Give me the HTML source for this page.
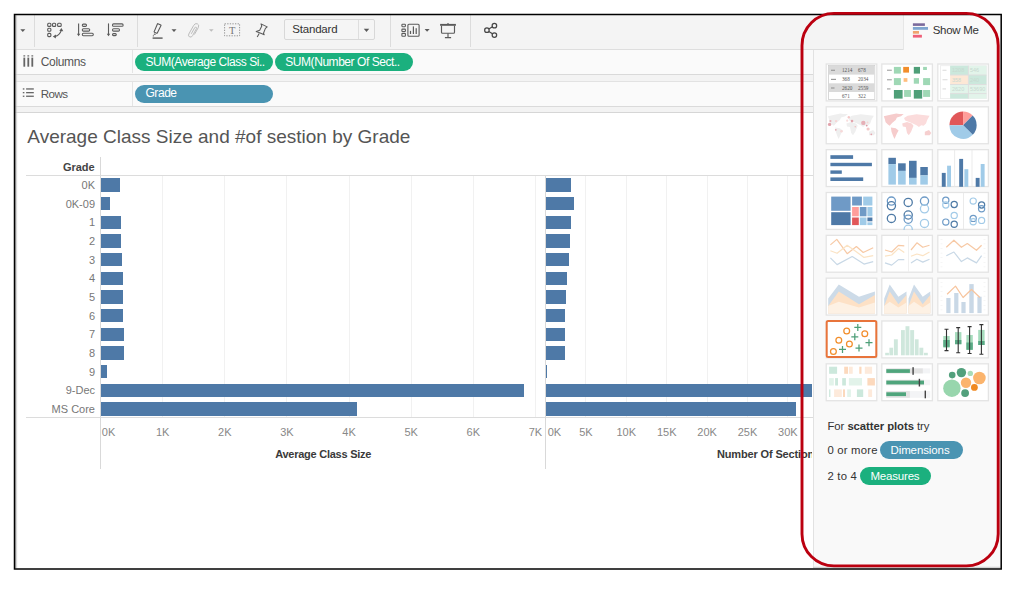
<!DOCTYPE html>
<html><head><meta charset="utf-8"><title>Tableau Show Me</title>
<style>
*{box-sizing:border-box;margin:0;padding:0}
html,body{width:1024px;height:589px;overflow:hidden;background:#fff;font-family:"Liberation Sans",sans-serif}
.a{position:absolute}
.t{position:absolute;white-space:nowrap;line-height:1}
.pill{position:absolute;color:#fff;white-space:nowrap;overflow:hidden;line-height:1}
.pill span{position:absolute;white-space:nowrap}
.g{background:#1bb07e}
.b{background:#4a94b2}
.bar{position:absolute;background:#4e79a7}
</style></head><body>

<div class="a" style="left:813.00px;top:49.00px;width:187.50px;height:519.00px;background:#f9f9f9;"></div>
<div class="a" style="left:812.50px;top:49.00px;width:1.00px;height:519.00px;background:#e2e2e2;"></div>
<div class="a" style="left:15.00px;top:15.00px;width:888.50px;height:34.00px;background:#f4f4f4;"></div>
<div class="a" style="left:15.00px;top:48.60px;width:888.50px;height:1.00px;background:#dedede;"></div>
<div class="a" style="left:903.50px;top:15.00px;width:97.00px;height:34.60px;background:#f9f9f9;"></div>
<div class="a" style="left:903.00px;top:15.00px;width:1.00px;height:34.60px;background:#e6e6e6;"></div>
<div class="a" style="left:15.00px;top:49.60px;width:797.50px;height:24.40px;background:#fafafa;"></div>
<div class="a" style="left:15.00px;top:73.50px;width:797.50px;height:1.00px;background:#d9d9d9;"></div>
<div class="a" style="left:15.00px;top:74.50px;width:797.50px;height:6.50px;background:#f3f3f3;"></div>
<div class="a" style="left:15.00px;top:81.00px;width:797.50px;height:1.00px;background:#e2e2e2;"></div>
<div class="a" style="left:15.00px;top:82.00px;width:797.50px;height:24.00px;background:#fafafa;"></div>
<div class="a" style="left:15.00px;top:106.00px;width:797.50px;height:1.00px;background:#dadada;"></div>
<div class="a" style="left:15.00px;top:107.00px;width:797.50px;height:4.80px;background:#f3f3f3;"></div>
<div class="a" style="left:15.00px;top:111.80px;width:797.50px;height:1.00px;background:#d6d6d6;"></div>
<div class="a" style="left:132.00px;top:49.60px;width:1.00px;height:23.90px;background:#e4e4e4;"></div>
<div class="a" style="left:132.00px;top:82.00px;width:1.00px;height:24.00px;background:#e4e4e4;"></div>
<div class="a" style="left:34.00px;top:15.00px;width:1.00px;height:32.00px;background:#dcdcdc;"></div>
<div class="a" style="left:136.50px;top:15.00px;width:1.00px;height:32.00px;background:#dcdcdc;"></div>
<div class="a" style="left:389.50px;top:15.00px;width:1.00px;height:32.00px;background:#dcdcdc;"></div>
<div class="a" style="left:469.50px;top:15.00px;width:1.00px;height:32.00px;background:#dcdcdc;"></div>
<div class="a" style="left:15.00px;top:112.80px;width:797.50px;height:455.20px;background:#ffffff;"></div>
<div class="t" style="left:27.30px;top:127.02px;font-size:19px;color:#555;font-weight:normal;letter-spacing:0px;">Average Class Size and #of sestion by Grade</div>
<div class="t" style="right:929.30px;top:162.49px;font-size:11px;color:#444;font-weight:bold;letter-spacing:0px;">Grade</div>
<div class="a" style="left:162.13px;top:176.00px;width:1.00px;height:241.00px;background:#f1f1f1;"></div>
<div class="a" style="left:224.26px;top:176.00px;width:1.00px;height:241.00px;background:#f1f1f1;"></div>
<div class="a" style="left:286.39px;top:176.00px;width:1.00px;height:241.00px;background:#f1f1f1;"></div>
<div class="a" style="left:348.52px;top:176.00px;width:1.00px;height:241.00px;background:#f1f1f1;"></div>
<div class="a" style="left:410.65px;top:176.00px;width:1.00px;height:241.00px;background:#f1f1f1;"></div>
<div class="a" style="left:472.78px;top:176.00px;width:1.00px;height:241.00px;background:#f1f1f1;"></div>
<div class="a" style="left:534.91px;top:176.00px;width:1.00px;height:241.00px;background:#f1f1f1;"></div>
<div class="a" style="left:585.40px;top:176.00px;width:1.00px;height:241.00px;background:#f1f1f1;"></div>
<div class="a" style="left:625.80px;top:176.00px;width:1.00px;height:241.00px;background:#f1f1f1;"></div>
<div class="a" style="left:666.20px;top:176.00px;width:1.00px;height:241.00px;background:#f1f1f1;"></div>
<div class="a" style="left:706.60px;top:176.00px;width:1.00px;height:241.00px;background:#f1f1f1;"></div>
<div class="a" style="left:747.00px;top:176.00px;width:1.00px;height:241.00px;background:#f1f1f1;"></div>
<div class="a" style="left:787.40px;top:176.00px;width:1.00px;height:241.00px;background:#f1f1f1;"></div>
<div class="a" style="left:25.50px;top:175.20px;width:787.00px;height:1.00px;background:#dcdcdc;"></div>
<div class="a" style="left:25.50px;top:416.50px;width:787.00px;height:1.00px;background:#dcdcdc;"></div>
<div class="a" style="left:100.00px;top:157.00px;width:1.00px;height:311.50px;background:#d9d9d9;"></div>
<div class="a" style="left:545.00px;top:176.00px;width:1.00px;height:292.50px;background:#d9d9d9;"></div>
<div class="a" style="left:100.70px;top:178.40px;width:19.10px;height:13.40px;background:#4e79a7;"></div>
<div class="a" style="left:545.90px;top:178.40px;width:24.90px;height:13.40px;background:#4e79a7;"></div>
<div class="t" style="right:929.00px;top:180.19px;font-size:11px;color:#777;font-weight:normal;letter-spacing:0px;">0K</div>
<div class="a" style="left:100.70px;top:197.05px;width:8.90px;height:13.40px;background:#4e79a7;"></div>
<div class="a" style="left:545.90px;top:197.05px;width:28.50px;height:13.40px;background:#4e79a7;"></div>
<div class="t" style="right:929.00px;top:198.84px;font-size:11px;color:#777;font-weight:normal;letter-spacing:0px;">0K-09</div>
<div class="a" style="left:100.70px;top:215.70px;width:20.50px;height:13.40px;background:#4e79a7;"></div>
<div class="a" style="left:545.90px;top:215.70px;width:24.90px;height:13.40px;background:#4e79a7;"></div>
<div class="t" style="right:929.00px;top:217.49px;font-size:11px;color:#777;font-weight:normal;letter-spacing:0px;">1</div>
<div class="a" style="left:100.70px;top:234.35px;width:20.40px;height:13.40px;background:#4e79a7;"></div>
<div class="a" style="left:545.90px;top:234.35px;width:24.00px;height:13.40px;background:#4e79a7;"></div>
<div class="t" style="right:929.00px;top:236.14px;font-size:11px;color:#777;font-weight:normal;letter-spacing:0px;">2</div>
<div class="a" style="left:100.70px;top:253.00px;width:21.50px;height:13.40px;background:#4e79a7;"></div>
<div class="a" style="left:545.90px;top:253.00px;width:22.70px;height:13.40px;background:#4e79a7;"></div>
<div class="t" style="right:929.00px;top:254.79px;font-size:11px;color:#777;font-weight:normal;letter-spacing:0px;">3</div>
<div class="a" style="left:100.70px;top:271.65px;width:22.60px;height:13.40px;background:#4e79a7;"></div>
<div class="a" style="left:545.90px;top:271.65px;width:21.00px;height:13.40px;background:#4e79a7;"></div>
<div class="t" style="right:929.00px;top:273.44px;font-size:11px;color:#777;font-weight:normal;letter-spacing:0px;">4</div>
<div class="a" style="left:100.70px;top:290.30px;width:22.70px;height:13.40px;background:#4e79a7;"></div>
<div class="a" style="left:545.90px;top:290.30px;width:20.10px;height:13.40px;background:#4e79a7;"></div>
<div class="t" style="right:929.00px;top:292.09px;font-size:11px;color:#777;font-weight:normal;letter-spacing:0px;">5</div>
<div class="a" style="left:100.70px;top:308.95px;width:22.70px;height:13.40px;background:#4e79a7;"></div>
<div class="a" style="left:545.90px;top:308.95px;width:19.10px;height:13.40px;background:#4e79a7;"></div>
<div class="t" style="right:929.00px;top:310.74px;font-size:11px;color:#777;font-weight:normal;letter-spacing:0px;">6</div>
<div class="a" style="left:100.70px;top:327.60px;width:23.30px;height:13.40px;background:#4e79a7;"></div>
<div class="a" style="left:545.90px;top:327.60px;width:19.10px;height:13.40px;background:#4e79a7;"></div>
<div class="t" style="right:929.00px;top:329.39px;font-size:11px;color:#777;font-weight:normal;letter-spacing:0px;">7</div>
<div class="a" style="left:100.70px;top:346.25px;width:23.30px;height:13.40px;background:#4e79a7;"></div>
<div class="a" style="left:545.90px;top:346.25px;width:19.10px;height:13.40px;background:#4e79a7;"></div>
<div class="t" style="right:929.00px;top:348.04px;font-size:11px;color:#777;font-weight:normal;letter-spacing:0px;">8</div>
<div class="a" style="left:100.70px;top:364.90px;width:6.50px;height:13.40px;background:#4e79a7;"></div>
<div class="a" style="left:545.90px;top:364.90px;width:0.90px;height:13.40px;background:#4e79a7;"></div>
<div class="t" style="right:929.00px;top:366.69px;font-size:11px;color:#777;font-weight:normal;letter-spacing:0px;">9</div>
<div class="a" style="left:100.70px;top:383.55px;width:423.50px;height:13.40px;background:#4e79a7;"></div>
<div class="a" style="left:545.90px;top:383.55px;width:266.60px;height:13.40px;background:#4e79a7;"></div>
<div class="t" style="right:929.00px;top:385.34px;font-size:11px;color:#777;font-weight:normal;letter-spacing:0px;">9-Dec</div>
<div class="a" style="left:100.70px;top:402.20px;width:255.90px;height:13.40px;background:#4e79a7;"></div>
<div class="a" style="left:545.90px;top:402.20px;width:249.90px;height:13.40px;background:#4e79a7;"></div>
<div class="t" style="right:929.00px;top:403.99px;font-size:11px;color:#777;font-weight:normal;letter-spacing:0px;">MS Core</div>
<div class="t" style="left:101.80px;top:426.79px;font-size:11px;color:#888;font-weight:normal;letter-spacing:0px;">0K</div>
<div class="t" style="left:62.63px;width:200px;text-align:center;top:426.79px;font-size:11px;color:#888;font-weight:normal;letter-spacing:0px;">1K</div>
<div class="t" style="left:124.76px;width:200px;text-align:center;top:426.79px;font-size:11px;color:#888;font-weight:normal;letter-spacing:0px;">2K</div>
<div class="t" style="left:186.89px;width:200px;text-align:center;top:426.79px;font-size:11px;color:#888;font-weight:normal;letter-spacing:0px;">3K</div>
<div class="t" style="left:249.02px;width:200px;text-align:center;top:426.79px;font-size:11px;color:#888;font-weight:normal;letter-spacing:0px;">4K</div>
<div class="t" style="left:311.15px;width:200px;text-align:center;top:426.79px;font-size:11px;color:#888;font-weight:normal;letter-spacing:0px;">5K</div>
<div class="t" style="left:373.28px;width:200px;text-align:center;top:426.79px;font-size:11px;color:#888;font-weight:normal;letter-spacing:0px;">6K</div>
<div class="t" style="left:435.41px;width:200px;text-align:center;top:426.79px;font-size:11px;color:#888;font-weight:normal;letter-spacing:0px;">7K</div>
<div class="t" style="left:547.70px;top:426.79px;font-size:11px;color:#888;font-weight:normal;letter-spacing:0px;">0K</div>
<div class="t" style="left:485.90px;width:200px;text-align:center;top:426.79px;font-size:11px;color:#888;font-weight:normal;letter-spacing:0px;">5K</div>
<div class="t" style="left:526.30px;width:200px;text-align:center;top:426.79px;font-size:11px;color:#888;font-weight:normal;letter-spacing:0px;">10K</div>
<div class="t" style="left:566.70px;width:200px;text-align:center;top:426.79px;font-size:11px;color:#888;font-weight:normal;letter-spacing:0px;">15K</div>
<div class="t" style="left:607.10px;width:200px;text-align:center;top:426.79px;font-size:11px;color:#888;font-weight:normal;letter-spacing:0px;">20K</div>
<div class="t" style="left:647.50px;width:200px;text-align:center;top:426.79px;font-size:11px;color:#888;font-weight:normal;letter-spacing:0px;">25K</div>
<div class="t" style="left:687.90px;width:200px;text-align:center;top:426.79px;font-size:11px;color:#888;font-weight:normal;letter-spacing:0px;">30K</div>
<div class="t" style="left:223.20px;width:200px;text-align:center;top:449.29px;font-size:11px;color:#3a3a3a;font-weight:bold;letter-spacing:-0.25px;">Average Class Size</div>
<div class="a" style="left:700px;top:440px;width:111.6px;height:30px;overflow:hidden"><div class="t" style="left:17.00px;top:9.29px;font-size:11px;color:#3a3a3a;font-weight:bold;letter-spacing:-0.15px;">Number Of Sections</div></div>
<div class="t" style="left:40.80px;top:55.84px;font-size:12px;color:#555;font-weight:normal;letter-spacing:-0.35px;">Columns</div>
<div class="t" style="left:40.85px;top:87.98px;font-size:11.6px;color:#555;font-weight:normal;letter-spacing:-0.6px;">Rows</div>
<div class="pill g" style="left:135.2px;top:52.8px;width:137.5px;height:18.5px;border-radius:9.25px"><span style="left:10.300000000000011px;top:2.74px;font-size:12px;letter-spacing:-0.45px">SUM(Average Class Si..</span></div>
<div class="pill g" style="left:275px;top:52.8px;width:137.5px;height:18.5px;border-radius:9.25px"><span style="left:10.300000000000011px;top:2.74px;font-size:12px;letter-spacing:-0.45px">SUM(Number Of Sect..</span></div>
<div class="pill b" style="left:135.2px;top:84.5px;width:137.5px;height:18.299999999999997px;border-radius:9.149999999999999px"><span style="left:10.300000000000011px;top:2.74px;font-size:12px;letter-spacing:-0.45px">Grade</span></div>
<div class="a" style="left:284.3px;top:19.3px;width:90.4px;height:20.9px;border:1px solid #d8d8d8;border-radius:2px;background:#f5f5f5"></div>
<div class="a" style="left:358.00px;top:20.30px;width:1.00px;height:18.90px;background:#dedede;"></div>
<div class="t" style="left:292.30px;top:24.02px;font-size:11.5px;color:#333;font-weight:normal;letter-spacing:-0.2px;">Standard</div>
<svg class="a" style="left:0;top:0" width="1024" height="120">
<g fill="#5a5a5a">
<path d="M20.3 29.3 L25.3 29.3 L22.8 32 Z"/>
<path d="M171.5 29.2 L176.5 29.2 L174 31.9 Z"/>
<path d="M209 29.2 L213.6 29.2 L211.3 31.8 Z" fill="#bdbdbd"/>
<path d="M363.8 28.8 L369.2 28.8 L366.5 31.9 Z"/>
<path d="M424.6 29.1 L429.6 29.1 L427.1 31.7 Z"/>
</g>
<g fill="none" stroke="#5a5a5a" stroke-width="1.1">
<!-- swap -->
<rect x="47.7" y="23.2" width="3.2" height="3.2" rx="1"/>
<rect x="52.5" y="23.2" width="3.2" height="3.2" rx="1"/>
<rect x="57.6" y="23.2" width="3.6" height="3.2" rx="1"/>
<rect x="47.7" y="28.2" width="3.2" height="3.0" rx="1"/>
<rect x="47.7" y="33.4" width="3.2" height="3.2" rx="1"/>
<path d="M55 36.4 Q59.6 35.6 61.3 30.4"/>
</g>
<g fill="#5a5a5a">
<path d="M52.8 36.6 L56 34.4 L55.8 38.5 Z"/>
<path d="M61.4 28 L59.3 31 L63.3 31.2 Z"/>
</g>
<g fill="none" stroke="#5a5a5a" stroke-width="1.1">
<!-- sort asc -->
<path d="M78.6 23.4 V34.5"/>
<rect x="82.3" y="24.1" width="4.2" height="2.3" rx="1.1"/>
<rect x="82.3" y="28.7" width="7.4" height="2.4" rx="1.1"/>
<rect x="82.3" y="33.3" width="11.0" height="2.4" rx="1.1"/>
<!-- sort desc -->
<path d="M108.5 23.4 V34.5"/>
<rect x="112.5" y="23.9" width="10.6" height="2.4" rx="1.1"/>
<rect x="112.5" y="28.8" width="7.0" height="2.3" rx="1.1"/>
<rect x="112.5" y="33.6" width="3.8" height="2.0" rx="1"/>
</g>
<g fill="#5a5a5a">
<path d="M76.9 33.8 L80.3 33.8 L78.6 36.2 Z"/>
<path d="M106.8 33.8 L110.2 33.8 L108.5 36.2 Z"/>
</g>
<!-- highlighter -->
<g fill="none" stroke="#5a5a5a" stroke-width="1.1">
<path d="M157.9 23.7 L160.8 24.9 Q161.2 25.2 161 25.6 L157.3 32.9 Q157 33.4 156.5 33.2 L154.5 32.3 Q154 32 154.2 31.6 L157.4 24 Q157.6 23.6 157.9 23.7 Z"/>
<path d="M153.8 33.9 L155.5 34.6"/>
<path d="M153.5 35.4 L153.2 36.3"/>
</g>
<rect x="152.6" y="37.4" width="10" height="1.4" fill="#5a5a5a"/>
<!-- paperclip -->
<g fill="none" stroke="#bcbcbc" stroke-width="1">
<path d="M194.4 34.5 L198.3 27.6 Q199.6 24.6 197.2 23.7 Q194.9 23 193.5 25.7 L188.8 34 Q187.9 36.2 189.7 37 Q191.6 37.6 192.6 35.6 L196.4 28.7 Q197 27.5 196.1 27.1 Q195.2 26.8 194.6 27.9 L191.3 33.8"/>
</g>
<!-- T box -->
<rect x="224.6" y="23.8" width="15" height="12" fill="none" stroke="#8a8a8a" stroke-width="0.9" stroke-dasharray="1.3 1.3"/>
<text x="232.1" y="33.6" font-family="Liberation Serif" font-size="10.5" fill="#777" text-anchor="middle">T</text>
<!-- pin -->
<g fill="none" stroke="#5a5a5a" stroke-width="1.05" stroke-linejoin="round">
<path d="M261 23.9 L267.2 26.9 L265.4 28.4 L263.5 33.3 L264.2 34.7 L261.4 33.5 L256.2 31.4 L259.7 30.2 L261.8 26 Z"/>
<path d="M259.2 33.5 L257.2 37.1"/>
</g>
<!-- show/hide cards -->
<g fill="none" stroke="#5a5a5a" stroke-width="1.1">
<rect x="401.9" y="24.3" width="3.5" height="2.4" rx="0.6"/>
<rect x="401.9" y="29.1" width="3.5" height="2.4" rx="0.6"/>
<rect x="401.9" y="33.4" width="3.5" height="2.9" rx="0.6"/>
<rect x="407.9" y="24.3" width="11.2" height="12" rx="1"/>
</g>
<g fill="#5a5a5a">
<rect x="409.9" y="30.9" width="1.2" height="3.1"/>
<rect x="412.8" y="26.4" width="1.2" height="7.6"/>
<rect x="415.6" y="28.2" width="1.2" height="5.8"/>
</g>
<!-- presentation -->
<g fill="none" stroke="#5a5a5a" stroke-width="1.15">
<path d="M441.5 25.8 V32.2 Q441.5 33.2 442.5 33.2 H453.5 Q454.5 33.2 454.5 32.2 V25.8"/>
<path d="M448 33.2 V37.6 M444.9 37.6 H451.1"/>
</g>
<rect x="440.1" y="23.9" width="15.8" height="1.9" fill="#5a5a5a"/>
<rect x="447.4" y="23" width="1.2" height="1" fill="#5a5a5a"/>
<!-- share -->
<g fill="none" stroke="#474747" stroke-width="1.25">
<circle cx="494.4" cy="25.7" r="2.25"/>
<circle cx="486.9" cy="30.2" r="2.25"/>
<circle cx="494.4" cy="35" r="2.25"/>
<path d="M488.8 29 L492.5 26.8 M488.8 31.4 L492.5 33.8"/>
</g>
<!-- show me icon -->
<rect x="912.9" y="23.3" width="12" height="2.6" fill="#7b6a9c"/>
<rect x="912.9" y="27" width="15.1" height="2.8" fill="#7fa6d0"/>
<rect x="912.9" y="31" width="6.1" height="2.7" fill="#f0a46e"/>
<rect x="912.9" y="34.8" width="9" height="2.8" fill="#ef6079"/>
<!-- rows / columns icons -->
<g fill="#666">
<rect x="23.4" y="55.3" width="1.8" height="1.2"/>
<rect x="27.4" y="55.3" width="1.8" height="1.2"/>
<rect x="31.4" y="55.3" width="1.8" height="1.2"/>
<rect x="23.4" y="57.6" width="1.8" height="9.1"/>
<rect x="27.4" y="57.6" width="1.8" height="9.1"/>
<rect x="31.4" y="57.6" width="1.8" height="9.1"/>
<rect x="22.8" y="88.3" width="1.6" height="1.3"/>
<rect x="22.8" y="92" width="1.6" height="1.3"/>
<rect x="22.8" y="95.6" width="1.6" height="1.3"/>
<rect x="26.1" y="88.3" width="7.7" height="1.3"/>
<rect x="26.1" y="92" width="7.7" height="1.3"/>
<rect x="26.1" y="95.6" width="7.7" height="1.3"/>
</g>
</svg>
<div class="t" style="left:932.70px;top:24.67px;font-size:11.5px;color:#333;font-weight:normal;letter-spacing:-0.3px;">Show Me</div>
<div class="t" style="left:827.50px;top:420.63px;font-size:11.3px;color:#333;font-weight:normal;letter-spacing:-0.05px;">For <b>scatter plots</b> try</div>
<div class="t" style="left:827.50px;top:445.33px;font-size:11.3px;color:#333;font-weight:normal;letter-spacing:0.2px;">0 or more</div>
<div class="t" style="left:827.50px;top:471.03px;font-size:11.3px;color:#333;font-weight:normal;letter-spacing:0.2px;">2 to 4</div>
<div class="pill b" style="left:879.8px;top:441.25px;width:82.90000000000009px;height:17.94999999999999px;border-radius:8.974999999999994px"><span style="left:10.700000000000045px;top:4.12px;font-size:11.5px;letter-spacing:-0.1px">Dimensions</span></div>
<div class="pill g" style="left:860.3px;top:467px;width:71.10000000000002px;height:18.30000000000001px;border-radius:9.150000000000006px"><span style="left:10.200000000000045px;top:4.17px;font-size:11.5px;letter-spacing:-0.2px">Measures</span></div>
<svg class="a" style="left:0;top:0" width="1024" height="589"><rect x="826.20" y="64.00" width="50.60" height="36.90" fill="#fff" stroke="#e4e4e4" stroke-width="1.3"/><rect x="881.80" y="64.00" width="50.60" height="36.90" fill="#fff" stroke="#e4e4e4" stroke-width="1.3"/><rect x="937.80" y="64.00" width="50.60" height="36.90" fill="#fff" stroke="#e4e4e4" stroke-width="1.3"/><rect x="826.20" y="106.83" width="50.60" height="36.90" fill="#fff" stroke="#e4e4e4" stroke-width="1.3"/><rect x="881.80" y="106.83" width="50.60" height="36.90" fill="#fff" stroke="#e4e4e4" stroke-width="1.3"/><rect x="937.80" y="106.83" width="50.60" height="36.90" fill="#fff" stroke="#e4e4e4" stroke-width="1.3"/><rect x="826.20" y="149.66" width="50.60" height="36.90" fill="#fff" stroke="#e4e4e4" stroke-width="1.3"/><rect x="881.80" y="149.66" width="50.60" height="36.90" fill="#fff" stroke="#e4e4e4" stroke-width="1.3"/><rect x="937.80" y="149.66" width="50.60" height="36.90" fill="#fff" stroke="#e4e4e4" stroke-width="1.3"/><rect x="826.20" y="192.49" width="50.60" height="36.90" fill="#fff" stroke="#e4e4e4" stroke-width="1.3"/><rect x="881.80" y="192.49" width="50.60" height="36.90" fill="#fff" stroke="#e4e4e4" stroke-width="1.3"/><rect x="937.80" y="192.49" width="50.60" height="36.90" fill="#fff" stroke="#e4e4e4" stroke-width="1.3"/><rect x="826.20" y="235.32" width="50.60" height="36.90" fill="#fff" stroke="#e4e4e4" stroke-width="1.3"/><rect x="881.80" y="235.32" width="50.60" height="36.90" fill="#fff" stroke="#e4e4e4" stroke-width="1.3"/><rect x="937.80" y="235.32" width="50.60" height="36.90" fill="#fff" stroke="#e4e4e4" stroke-width="1.3"/><rect x="826.20" y="278.15" width="50.60" height="36.90" fill="#fff" stroke="#e4e4e4" stroke-width="1.3"/><rect x="881.80" y="278.15" width="50.60" height="36.90" fill="#fff" stroke="#e4e4e4" stroke-width="1.3"/><rect x="937.80" y="278.15" width="50.60" height="36.90" fill="#fff" stroke="#e4e4e4" stroke-width="1.3"/><rect x="826.20" y="320.98" width="50.60" height="36.90" fill="#fff" stroke="#e4e4e4" stroke-width="1.3"/><rect x="881.80" y="320.98" width="50.60" height="36.90" fill="#fff" stroke="#e4e4e4" stroke-width="1.3"/><rect x="937.80" y="320.98" width="50.60" height="36.90" fill="#fff" stroke="#e4e4e4" stroke-width="1.3"/><rect x="826.20" y="363.81" width="50.60" height="36.90" fill="#fff" stroke="#e4e4e4" stroke-width="1.3"/><rect x="881.80" y="363.81" width="50.60" height="36.90" fill="#fff" stroke="#e4e4e4" stroke-width="1.3"/><rect x="937.80" y="363.81" width="50.60" height="36.90" fill="#fff" stroke="#e4e4e4" stroke-width="1.3"/><rect x="828.50" y="65.40" width="46.30" height="34.00" fill="#fff" stroke="#cfcfcf" stroke-width="0.8"/><rect x="829.00" y="65.80" width="45.40" height="8.80" fill="#dadada" /><rect x="829.00" y="83.30" width="45.40" height="8.70" fill="#dadada" /><text x="842" y="72.3" font-family="Liberation Serif" font-size="5.2" fill="#555">1214</text><text x="858" y="72.3" font-family="Liberation Serif" font-size="5.2" fill="#555">678</text><text x="842" y="81" font-family="Liberation Serif" font-size="5.2" fill="#555">368</text><text x="858" y="81" font-family="Liberation Serif" font-size="5.2" fill="#555">2034</text><text x="842" y="89.7" font-family="Liberation Serif" font-size="5.2" fill="#555">2620</text><text x="858" y="89.7" font-family="Liberation Serif" font-size="5.2" fill="#555">2559</text><text x="842" y="97.6" font-family="Liberation Serif" font-size="5.2" fill="#555">671</text><text x="858" y="97.6" font-family="Liberation Serif" font-size="5.2" fill="#555">322</text><rect x="831.00" y="69.70" width="4.00" height="1.20" fill="#9a9a9a" /><rect x="831.00" y="78.80" width="5.00" height="1.20" fill="#9a9a9a" /><rect x="831.00" y="87.40" width="3.50" height="1.20" fill="#9a9a9a" /><rect x="887.00" y="69.60" width="4.80" height="1.40" fill="#b5b5b5" /><rect x="887.00" y="79.00" width="4.80" height="1.40" fill="#b5b5b5" /><rect x="887.00" y="88.20" width="3.50" height="1.40" fill="#b5b5b5" /><rect x="893.90" y="66.90" width="7.00" height="6.70" fill="#9fd8b5" /><rect x="903.20" y="66.90" width="5.80" height="5.70" fill="#f28e2b" /><rect x="913.80" y="66.90" width="6.20" height="6.70" fill="#4f9f78" /><rect x="923.10" y="66.90" width="3.80" height="3.10" fill="#9fd8b5" /><rect x="893.90" y="78.10" width="7.00" height="7.00" fill="#9fd8b5" /><rect x="903.60" y="78.10" width="3.80" height="3.70" fill="#ffbe7d" /><rect x="913.80" y="78.10" width="5.20" height="5.60" fill="#9fd8b5" /><rect x="923.10" y="78.10" width="7.00" height="7.00" fill="#9fd8b5" /><rect x="893.90" y="90.00" width="8.70" height="8.60" fill="#4f9f78" /><rect x="904.10" y="90.00" width="6.90" height="6.90" fill="#9fd8b5" /><rect x="913.80" y="90.00" width="8.40" height="8.60" fill="#4f9f78" /><rect x="923.10" y="90.00" width="7.00" height="6.90" fill="#9fd8b5" /><rect x="940.50" y="65.70" width="45.90" height="32.90" fill="#fff" stroke="#ececec" stroke-width="0.8"/><rect x="950.10" y="65.70" width="18.30" height="9.30" fill="#cbe8dc" /><rect x="968.40" y="65.70" width="18.00" height="9.30" fill="#e2f4ea" /><rect x="950.10" y="75.00" width="18.30" height="9.50" fill="#fde8d6" /><rect x="968.40" y="75.00" width="18.00" height="9.50" fill="#cbe8dc" /><rect x="950.10" y="84.50" width="18.30" height="9.10" fill="#e2f4ea" /><rect x="968.40" y="84.50" width="18.00" height="9.10" fill="#e2f4ea" /><rect x="950.10" y="93.60" width="18.30" height="5.00" fill="#cbe8dc" /><rect x="968.40" y="93.60" width="18.00" height="5.00" fill="#e2f4ea" /><rect x="950.10" y="74.50" width="36.30" height="1.00" fill="#dedede" /><rect x="950.10" y="84.00" width="36.30" height="1.00" fill="#dedede" /><rect x="950.10" y="93.10" width="36.30" height="1.00" fill="#dedede" /><rect x="967.90" y="65.70" width="1.00" height="32.90" fill="#dedede" /><rect x="942.50" y="69.70" width="4.00" height="1.20" fill="#e0e0e0" /><rect x="942.50" y="79.10" width="5.00" height="1.20" fill="#e0e0e0" /><rect x="942.50" y="88.30" width="3.50" height="1.20" fill="#e0e0e0" /><text x="952" y="72.3" font-family="Liberation Sans" font-size="5.5" fill="#c8d9d0">1208</text><text x="970" y="72.3" font-family="Liberation Sans" font-size="5.5" fill="#c8d9d0">546</text><text x="952" y="81.8" font-family="Liberation Sans" font-size="5.5" fill="#c8d9d0">358</text><text x="970" y="81.8" font-family="Liberation Sans" font-size="5.5" fill="#c8d9d0">240</text><text x="952" y="91" font-family="Liberation Sans" font-size="5.5" fill="#c8d9d0">2620</text><text x="970" y="91" font-family="Liberation Sans" font-size="5.5" fill="#c8d9d0">53690</text><polygon points="883.8,116.3 889.1,115.1 896.3,113.6 899.2,113.9 903.7,113.9 901.0,116.3 896.9,117.5 895.7,119.9 892.1,122.9 889.7,125.8 887.9,124.6 885.6,122.3 884.7,118.7" fill="#f6cccc" /><polygon points="828.0,116.3 833.3,115.1 840.5,113.6 843.4,113.9 847.9,113.9 845.2,116.3 841.1,117.5 839.9,119.9 836.3,122.9 833.9,125.8 832.1,124.6 829.8,122.3 828.9,118.7" fill="#efefef" /><polygon points="890.9,127.6 895.7,128.2 898.6,130.6 896.9,133.6 894.5,138.9 893.3,136.5 891.5,131.8" fill="#f6cccc" /><polygon points="835.1,127.6 839.9,128.2 842.8,130.6 841.1,133.6 838.7,138.9 837.5,136.5 835.7,131.8" fill="#efefef" /><polygon points="904.0,118.1 907.6,115.7 916.5,114.2 929.6,115.7 927.2,119.9 926.0,123.5 923.6,125.8 921.2,125.2 918.9,127.0 916.5,125.2 912.9,123.5 909.9,122.3 905.2,120.5" fill="#fbdcdc" /><polygon points="848.2,118.1 851.8,115.7 860.7,114.2 873.8,115.7 871.4,119.9 870.2,123.5 867.8,125.8 865.4,125.2 863.1,127.0 860.7,125.2 857.1,123.5 854.1,122.3 849.4,120.5" fill="#efefef" /><polygon points="902.2,123.5 907.0,122.0 911.7,123.5 913.5,125.8 911.1,131.8 908.8,135.3 907.0,133.0 905.8,127.0 902.8,126.4" fill="#f9d6d6" /><polygon points="846.4,123.5 851.2,122.0 855.9,123.5 857.7,125.8 855.3,131.8 853.0,135.3 851.2,133.0 850.0,127.0 847.0,126.4" fill="#efefef" /><polygon points="924.8,131.8 929.0,130.0 931.3,133.0 929.6,135.3 924.8,135.3" fill="#f6cfcf" /><polygon points="869.0,131.8 873.2,130.0 875.5,133.0 873.8,135.3 869.0,135.3" fill="#efefef" /><circle cx="829.6" cy="124.4" r="1.7" fill="#e2a3ac"/><circle cx="830.4" cy="121.1" r="1.1" fill="#e6b0b7"/><circle cx="836.1" cy="121.1" r="1.2" fill="#f6d6d6"/><circle cx="835.8" cy="129.8" r="0.9" fill="#e3a8b0"/><circle cx="841.5" cy="131.3" r="1.3" fill="#f7d9d9"/><circle cx="848.8" cy="117.3" r="1.2" fill="#f3c8c8"/><circle cx="847.2" cy="120.7" r="1.1" fill="#f8dcdc"/><circle cx="852" cy="121.1" r="1.3" fill="#e3a5ad"/><circle cx="855.3" cy="126.7" r="0.8" fill="#f0c0c0"/><circle cx="863.3" cy="122.9" r="2.2" fill="#e6b0b7"/><circle cx="867.6" cy="122.5" r="0.9" fill="#f6d6d6"/><circle cx="866.7" cy="125.6" r="0.9" fill="#dd9aa5"/><circle cx="868.1" cy="129" r="1.6" fill="#f3c8c8"/><circle cx="871.3" cy="134.3" r="0.9" fill="#e3a5ad"/><path d="M963.05 125.2 L949.45 125.2 A13.6 13.6 0 0 1 963.05 111.6 Z" fill="#e15759"/><path d="M963.05 125.2 L963.05 111.6 A13.6 13.6 0 0 1 972.67 115.58 Z" fill="#ff9d9a"/><path d="M963.05 125.2 L972.67 115.58 A13.6 13.6 0 0 1 972.67 134.82 Z" fill="#4e79a7"/><path d="M963.05 125.2 L972.67 134.82 A13.6 13.6 0 0 1 949.45 125.2 Z" fill="#a0cbe8"/><rect x="830.40" y="155.20" width="22.70" height="3.70" fill="#4e79a7" /><rect x="830.40" y="162.80" width="41.50" height="3.40" fill="#4e79a7" /><rect x="830.40" y="170.40" width="11.40" height="3.40" fill="#4e79a7" /><rect x="830.40" y="177.40" width="32.80" height="3.60" fill="#4e79a7" /><rect x="888.40" y="157.80" width="7.50" height="6.30" fill="#4e79a7" /><rect x="888.40" y="164.10" width="7.50" height="20.50" fill="#a0cbe8" /><rect x="898.10" y="163.30" width="7.60" height="7.60" fill="#4e79a7" /><rect x="898.10" y="170.90" width="7.60" height="13.70" fill="#a0cbe8" /><rect x="909.00" y="160.80" width="7.60" height="17.10" fill="#4e79a7" /><rect x="909.00" y="177.90" width="7.60" height="6.70" fill="#a0cbe8" /><rect x="920.30" y="167.00" width="7.50" height="8.40" fill="#4e79a7" /><rect x="920.30" y="175.40" width="7.50" height="9.20" fill="#a0cbe8" /><rect x="954.30" y="149.50" width="0.80" height="37.20" fill="#e6e6e6" /><rect x="971.60" y="149.50" width="0.80" height="37.20" fill="#e6e6e6" /><rect x="941.80" y="172.90" width="3.90" height="13.90" fill="#4e79a7" /><rect x="947.10" y="165.70" width="3.90" height="21.10" fill="#a0cbe8" /><rect x="959.20" y="158.90" width="3.90" height="27.90" fill="#4e79a7" /><rect x="964.40" y="169.20" width="3.90" height="17.60" fill="#a0cbe8" /><rect x="975.70" y="177.90" width="3.90" height="8.90" fill="#4e79a7" /><rect x="980.70" y="164.00" width="3.90" height="22.80" fill="#a0cbe8" /><rect x="831.20" y="196.60" width="19.40" height="14.20" fill="#6f9ac6" /><rect x="831.20" y="212.20" width="19.40" height="12.90" fill="#4e79a7" /><rect x="852.10" y="196.60" width="9.80" height="8.90" fill="#6f9ac6" /><rect x="863.20" y="196.60" width="9.20" height="8.90" fill="#a0cbe8" /><rect x="852.10" y="207.00" width="6.70" height="9.30" fill="#ff9d9a" /><rect x="852.10" y="217.50" width="6.70" height="7.60" fill="#e15759" /><rect x="859.80" y="207.00" width="6.70" height="9.30" fill="#6f9ac6" /><rect x="867.40" y="207.00" width="5.00" height="9.30" fill="#a0cbe8" /><rect x="859.80" y="217.50" width="6.70" height="7.60" fill="#a0cbe8" /><rect x="867.40" y="217.50" width="5.00" height="3.80" fill="#4e79a7" /><rect x="867.40" y="222.30" width="5.00" height="2.80" fill="#a0cbe8" /><clipPath id="t42"><rect x="881.5" y="192" width="51.6" height="37.9"/></clipPath><g fill="none" stroke-width="1.3" clip-path="url(#t42)"><circle cx="891.4" cy="201.1" r="4.1" stroke="#6e9bc7"/><circle cx="891.4" cy="205.8" r="4.1" stroke="#4f7ba6"/><circle cx="891.4" cy="218.4" r="4.1" stroke="#4f7ba6"/><circle cx="908.2" cy="202.4" r="4.1" stroke="#4f7ba6"/><circle cx="908.2" cy="215" r="4.1" stroke="#4f7ba6"/><circle cx="908.2" cy="219.2" r="4.1" stroke="#6e9bc7"/><circle cx="908.2" cy="229.3" r="4.1" stroke="#a3cbe8"/><circle cx="924.5" cy="201.1" r="4.1" stroke="#6e9bc7"/><circle cx="924.5" cy="208.8" r="4.1" stroke="#a3cbe8"/><circle cx="924.5" cy="223.4" r="4.1" stroke="#a3cbe8"/></g><rect x="963.20" y="192.50" width="0.80" height="36.90" fill="#e6e6e6" /><g fill="none" stroke-width="1.2"><circle cx="945.8" cy="200.3" r="3.1" stroke="#6e9bc7"/><circle cx="945.8" cy="205" r="3.1" stroke="#a3cbe8"/><circle cx="954.2" cy="204.5" r="3.1" stroke="#4f7ba6"/><circle cx="954.2" cy="215.4" r="3.1" stroke="#a3cbe8"/><circle cx="945.8" cy="222.1" r="3.1" stroke="#6e9bc7"/><circle cx="954.2" cy="224.3" r="3.1" stroke="#4f7ba6"/><circle cx="973.2" cy="201.1" r="3.1" stroke="#a3cbe8"/><circle cx="981.6" cy="205" r="3.1" stroke="#4f7ba6"/><circle cx="981.6" cy="208.8" r="3.1" stroke="#6e9bc7"/><circle cx="973.2" cy="218.4" r="3.1" stroke="#6e9bc7"/><circle cx="973.2" cy="221.8" r="3.1" stroke="#a3cbe8"/><circle cx="981.6" cy="220.4" r="3.1" stroke="#a3cbe8"/></g><polyline points="830.4,244.9 836.8,239.4 847.2,253.7 856.4,246.5 863.2,252.5 873.2,247.8" fill="none" stroke="#f7c9a5" stroke-width="1.2" stroke-linejoin="round" /><polyline points="830.4,250.8 837.1,253.3 847.2,245.3 855.6,251.2 864.0,257.4 873.2,255.7" fill="none" stroke="#fbe3c4" stroke-width="1.2" stroke-linejoin="round" /><polyline points="830.4,257.9 837.1,264.6 852.2,256.5 864.0,264.1 873.2,261.6" fill="none" stroke="#c8d8e6" stroke-width="1.2" stroke-linejoin="round" /><rect x="908.10" y="235.30" width="0.80" height="36.40" fill="#ececec" /><polyline points="885.0,250.0 891.7,252.0 898.4,245.3 904.3,245.8" fill="none" stroke="#f7c9a5" stroke-width="1.2" stroke-linejoin="round" /><polyline points="885.0,256.2 891.7,255.0 898.4,248.6 904.3,252.5" fill="none" stroke="#fbe3c4" stroke-width="1.2" stroke-linejoin="round" /><polyline points="885.0,262.9 891.7,265.1 898.4,259.6 904.3,259.6" fill="none" stroke="#c8d8e6" stroke-width="1.2" stroke-linejoin="round" /><polyline points="911.0,250.0 916.9,242.8 922.8,247.3 929.5,245.3" fill="none" stroke="#f7c9a5" stroke-width="1.2" stroke-linejoin="round" /><polyline points="911.0,256.2 916.9,254.0 922.8,255.7 929.5,252.0" fill="none" stroke="#fbe3c4" stroke-width="1.2" stroke-linejoin="round" /><polyline points="911.0,262.9 916.9,259.2 922.8,262.1 929.5,259.2" fill="none" stroke="#c8d8e6" stroke-width="1.2" stroke-linejoin="round" /><polyline points="946.3,247.3 953.9,240.2 961.4,247.3 967.3,243.6 976.5,250.3 981.6,245.3" fill="none" stroke="#f7c9a5" stroke-width="1.2" stroke-linejoin="round" /><polyline points="946.3,255.7 953.9,252.0 961.4,261.6 967.3,257.9 976.5,262.9 981.6,255.7" fill="none" stroke="#c8d8e6" stroke-width="1.2" stroke-linejoin="round" /><rect x="940.50" y="239.00" width="2.00" height="0.60" fill="#eeeeee" /><rect x="983.50" y="239.00" width="2.00" height="0.60" fill="#eeeeee" /><rect x="940.50" y="243.60" width="2.00" height="0.60" fill="#eeeeee" /><rect x="983.50" y="243.60" width="2.00" height="0.60" fill="#eeeeee" /><rect x="940.50" y="248.20" width="2.00" height="0.60" fill="#eeeeee" /><rect x="983.50" y="248.20" width="2.00" height="0.60" fill="#eeeeee" /><rect x="940.50" y="252.80" width="2.00" height="0.60" fill="#eeeeee" /><rect x="983.50" y="252.80" width="2.00" height="0.60" fill="#eeeeee" /><rect x="940.50" y="257.40" width="2.00" height="0.60" fill="#eeeeee" /><rect x="983.50" y="257.40" width="2.00" height="0.60" fill="#eeeeee" /><rect x="940.50" y="262.00" width="2.00" height="0.60" fill="#eeeeee" /><rect x="983.50" y="262.00" width="2.00" height="0.60" fill="#eeeeee" /><rect x="940.50" y="266.60" width="2.00" height="0.60" fill="#eeeeee" /><rect x="983.50" y="266.60" width="2.00" height="0.60" fill="#eeeeee" /><polygon points="828.2,313.5 828.2,298.4 838.8,284.4 859.0,296.7 874.9,291.6 874.9,313.5" fill="#cddbe8" /><polygon points="828.2,313.5 828.2,305.9 838.8,291.6 859.0,304.2 874.9,295.0 874.9,313.5" fill="#fde1c6" /><polygon points="828.2,313.5 828.2,305.9 838.8,301.7 859.0,307.6 874.9,302.6 874.9,313.5" fill="#fdf1e4" /><polygon points="884.2,313.5 884.2,298.4 889.7,284.4 898.4,296.7 906.5,291.6 906.5,313.5" fill="#cddbe8" /><polygon points="884.2,313.5 884.2,305.9 889.7,291.6 898.4,304.2 906.5,295.0 906.5,313.5" fill="#fde1c6" /><polygon points="884.2,313.5 884.2,305.9 889.7,301.7 898.4,307.6 906.5,302.6 906.5,313.5" fill="#fdf1e4" /><polygon points="908.5,313.5 908.5,298.4 914.0,284.4 922.7,296.7 930.3,291.6 930.3,313.5" fill="#cddbe8" /><polygon points="908.5,313.5 908.5,305.9 914.0,291.6 922.7,304.2 930.3,295.0 930.3,313.5" fill="#fde1c6" /><polygon points="908.5,313.5 908.5,305.9 914.0,301.7 922.7,307.6 930.3,302.6 930.3,313.5" fill="#fdf1e4" /><rect x="946.30" y="298.00" width="4.20" height="15.10" fill="#c9d8e6" /><rect x="954.20" y="293.00" width="4.20" height="20.10" fill="#c9d8e6" /><rect x="961.40" y="302.00" width="4.20" height="11.10" fill="#c9d8e6" /><rect x="969.30" y="284.10" width="4.40" height="29.00" fill="#c9d8e6" /><rect x="977.40" y="296.70" width="4.20" height="16.40" fill="#c9d8e6" /><polyline points="947.1,294.2 955.5,286.1 963.1,297.5 971.5,289.5 979.9,297.5" fill="none" stroke="#f7c49d" stroke-width="1.2" stroke-linejoin="round" /><rect x="940.50" y="282.00" width="2.00" height="0.60" fill="#eeeeee" /><rect x="983.50" y="282.00" width="2.00" height="0.60" fill="#eeeeee" /><rect x="940.50" y="286.60" width="2.00" height="0.60" fill="#eeeeee" /><rect x="983.50" y="286.60" width="2.00" height="0.60" fill="#eeeeee" /><rect x="940.50" y="291.20" width="2.00" height="0.60" fill="#eeeeee" /><rect x="983.50" y="291.20" width="2.00" height="0.60" fill="#eeeeee" /><rect x="940.50" y="295.80" width="2.00" height="0.60" fill="#eeeeee" /><rect x="983.50" y="295.80" width="2.00" height="0.60" fill="#eeeeee" /><rect x="940.50" y="300.40" width="2.00" height="0.60" fill="#eeeeee" /><rect x="983.50" y="300.40" width="2.00" height="0.60" fill="#eeeeee" /><rect x="940.50" y="305.00" width="2.00" height="0.60" fill="#eeeeee" /><rect x="983.50" y="305.00" width="2.00" height="0.60" fill="#eeeeee" /><rect x="940.50" y="309.60" width="2.00" height="0.60" fill="#eeeeee" /><rect x="983.50" y="309.60" width="2.00" height="0.60" fill="#eeeeee" /><rect x="826.7" y="321" width="49.6" height="36" rx="1.5" fill="#fff" stroke="#e8743b" stroke-width="2"/><g fill="none" stroke="#f28e2b" stroke-width="1.25"><circle cx="846.7" cy="331" r="2.9"/><circle cx="864.8" cy="333.8" r="2.9"/><circle cx="838.8" cy="340.2" r="2.9"/><circle cx="849.4" cy="343.9" r="2.9"/><circle cx="833.4" cy="351.4" r="2.9"/></g><g fill="none" stroke="#4e9f78" stroke-width="1.25"><path d="M854.3 327.4 H861.3 M857.8 323.9 V330.9"/><path d="M851.3 336.8 H858.3 M854.8 333.3 V340.3"/><path d="M865.5 342.7 H872.5 M869 339.2 V346.2"/><path d="M855.5 348.1 H862.5 M859 344.6 V351.6"/><path d="M839.0 349.4 H846.0 M842.5 345.9 V352.9"/></g><rect x="885.20" y="352.80" width="3.70" height="2.50" fill="#cfe7dc" /><rect x="889.40" y="347.70" width="3.70" height="7.60" fill="#cfe7dc" /><rect x="893.90" y="339.30" width="3.90" height="16.00" fill="#cfe7dc" /><rect x="901.00" y="330.10" width="3.80" height="25.20" fill="#cfe7dc" /><rect x="905.50" y="326.20" width="3.90" height="29.10" fill="#cfe7dc" /><rect x="910.20" y="330.10" width="3.90" height="25.20" fill="#cfe7dc" /><rect x="914.90" y="339.30" width="3.70" height="16.00" fill="#cfe7dc" /><rect x="919.40" y="347.70" width="3.90" height="7.60" fill="#cfe7dc" /><rect x="924.00" y="352.80" width="3.80" height="2.50" fill="#cfe7dc" /><rect x="943.30" y="336.00" width="6.40" height="11.70" fill="#a6dcbd" /><rect x="943.30" y="340.00" width="6.40" height="6.90" fill="#5aaa85" /><path d="M946.5 329.3 V350.6 M944.5 329.3 H948.5 M944.5 350.6 H948.5" stroke="#333" stroke-width="1.1" fill="none"/><rect x="955.00" y="332.10" width="6.40" height="12.10" fill="#a6dcbd" /><rect x="955.00" y="340.00" width="6.40" height="4.20" fill="#5aaa85" /><path d="M958.2 327.6 V352.8 M956.2 327.6 H960.2 M956.2 352.8 H960.2" stroke="#333" stroke-width="1.1" fill="none"/><rect x="966.40" y="335.00" width="6.40" height="14.80" fill="#a6dcbd" /><rect x="966.40" y="342.50" width="6.40" height="7.30" fill="#5aaa85" /><path d="M969.6 326.6 V353.5 M967.6 326.6 H971.6 M967.6 353.5 H971.6" stroke="#333" stroke-width="1.1" fill="none"/><rect x="978.20" y="329.90" width="6.40" height="15.10" fill="#a6dcbd" /><rect x="978.20" y="341.00" width="6.40" height="4.00" fill="#5aaa85" /><path d="M981.4 324.6 V354.3 M979.4 324.6 H983.4 M979.4 354.3 H983.4" stroke="#333" stroke-width="1.1" fill="none"/><rect x="829.10" y="366.70" width="8.00" height="7.10" fill="#cce8dc" /><rect x="844.20" y="366.70" width="3.80" height="7.10" fill="#fcd9bd" /><rect x="848.90" y="366.70" width="3.80" height="7.10" fill="#fdeadb" /><rect x="859.30" y="366.70" width="2.20" height="7.10" fill="#fcd9bd" /><rect x="864.80" y="366.70" width="7.30" height="7.10" fill="#fdeadb" /><rect x="829.10" y="378.10" width="4.70" height="7.40" fill="#e2f3ea" /><rect x="835.10" y="378.10" width="2.90" height="7.40" fill="#cce8dc" /><rect x="842.20" y="378.10" width="3.70" height="7.40" fill="#cce8dc" /><rect x="848.90" y="378.10" width="13.10" height="7.40" fill="#e2f3ea" /><rect x="867.40" y="378.10" width="7.50" height="7.40" fill="#fcd9bd" /><rect x="829.10" y="389.40" width="1.30" height="7.60" fill="#cce8dc" /><rect x="834.10" y="389.40" width="7.70" height="7.60" fill="#fdeadb" /><rect x="843.00" y="389.40" width="2.00" height="7.60" fill="#fcd9bd" /><rect x="847.20" y="389.40" width="3.70" height="7.60" fill="#e2f3ea" /><rect x="856.90" y="389.40" width="6.30" height="7.60" fill="#cce8dc" /><rect x="868.20" y="389.40" width="3.90" height="7.60" fill="#fdeadb" /><rect x="886.30" y="368.40" width="44.00" height="5.00" fill="#f3f4f6" /><rect x="886.30" y="368.40" width="36.50" height="5.00" fill="#e3e3e3" /><rect x="886.30" y="369.20" width="23.60" height="3.70" fill="#4fa57c" /><rect x="912.40" y="367.20" width="1.40" height="7.60" fill="#444" /><rect x="886.30" y="379.80" width="44.00" height="5.40" fill="#f3f4f6" /><rect x="886.30" y="379.80" width="37.70" height="5.40" fill="#e3e3e3" /><rect x="886.30" y="380.60" width="37.70" height="3.80" fill="#4fa57c" /><rect x="918.70" y="378.80" width="1.40" height="7.70" fill="#444" /><rect x="886.30" y="391.10" width="44.00" height="6.70" fill="#f3f4f6" /><rect x="886.30" y="391.10" width="23.60" height="6.70" fill="#e3e3e3" /><rect x="886.30" y="392.30" width="19.70" height="3.80" fill="#4fa57c" /><rect x="924.60" y="390.60" width="1.40" height="7.70" fill="#444" /><circle cx="951.9" cy="388.2" r="8.7" fill="#98d6ad"/><circle cx="961.4" cy="372.6" r="4.7" fill="#52a07c"/><circle cx="952.2" cy="375.1" r="3.3" fill="#52a07c"/><circle cx="970.3" cy="373.4" r="2.7" fill="#a8dcb8"/><circle cx="979.4" cy="378" r="6.3" fill="#fbb46d"/><circle cx="966" cy="382.7" r="5.2" fill="#fbb46d"/><circle cx="974.4" cy="387.4" r="3.4" fill="#f08a22"/><circle cx="965.1" cy="393.1" r="3.9" fill="#52a07c"/></svg>
<svg class="a" style="left:0;top:0" width="1024" height="589">
<defs><linearGradient id="lg" x1="0" x2="1" y1="0" y2="0"><stop offset="0" stop-color="#858585"/><stop offset="1" stop-color="#fff" stop-opacity="0"/></linearGradient></defs>
<linearGradient id="bg2" x1="0" x2="0" y1="0" y2="1"><stop offset="0" stop-color="#fff" stop-opacity="0"/><stop offset="1" stop-color="#b8b8b8"/></linearGradient>
<rect x="15.2" y="15.2" width="3" height="553" fill="url(#lg)"/>
<rect x="813" y="565.2" width="187.5" height="3" fill="url(#bg2)"/>
<rect x="14.5" y="14.5" width="986.7" height="554.5" fill="none" stroke="#000" stroke-width="1.5"/>
<rect x="802" y="13.4" width="196.2" height="552.5" rx="32" ry="32" fill="none" stroke="#bb0010" stroke-width="2.9"/>
</svg>

</body></html>
